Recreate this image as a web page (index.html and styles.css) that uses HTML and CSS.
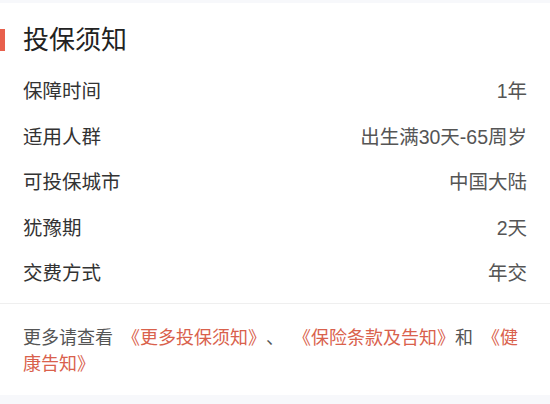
FILE: index.html
```html
<!DOCTYPE html>
<html lang="zh-CN">
<head>
<meta charset="utf-8">
<link rel="stylesheet" href="styles.css">
</head>
<body>
<div class="page">
  <section class="card">
    <div class="card-body">
      <h2 class="title">投保须知</h2>
      <ul class="rows">
        <li class="row"><span class="label">保障时间</span><span class="value">1年</span></li>
        <li class="row"><span class="label">适用人群</span><span class="value">出生满30天-65周岁</span></li>
        <li class="row"><span class="label">可投保城市</span><span class="value">中国大陆</span></li>
        <li class="row"><span class="label">犹豫期</span><span class="value">2天</span></li>
        <li class="row"><span class="label">交费方式</span><span class="value">年交</span></li>
      </ul>
    </div>
    <p class="note">更多请查看 <span class="link">《更多投保须知》</span>、 <span class="link">《保险条款及告知》</span>和 <span class="link">《健康告知》</span></p>
  </section>
</div>
</body>
</html>
```

FILE: styles.css
```css
* { box-sizing: border-box; }
html, body { margin: 0; padding: 0; }
body {
  background: #f7f8fb;
  font-family: "Liberation Sans", "Noto Sans CJK SC", sans-serif;
  width: 550px;
  height: 404px;
  overflow: hidden;
  text-spacing-trim: space-all;
}
.page { padding-top: 3px; }
.card {
  background: #fff;
  height: 392px;
}
.card-body {
  padding: 19px 0 8px;
  border-bottom: 1px solid #efefef;
}
.title {
  position: relative;
  margin: 0 0 9px;
  padding: 0 23px;
  font-size: 26px;
  line-height: 36px;
  font-weight: 400;
  color: #222;
}
.title::before {
  content: "";
  position: absolute;
  left: 0;
  top: 7px;
  width: 5px;
  height: 22px;
  background: #e8604c;
}
.rows {
  list-style: none;
  margin: 0;
  padding: 0 23px;
}
.row {
  display: flex;
  justify-content: space-between;
  align-items: center;
  height: 45.5px;
  font-size: 19.5px;
}
.label { color: #333; }
.value { color: #555; }
.note {
  margin: 0;
  padding: 21px 23px 0;
  font-size: 18px;
  line-height: 26px;
  color: #555;
  word-spacing: 4px;
}
.link { color: #d9614c; }
```
